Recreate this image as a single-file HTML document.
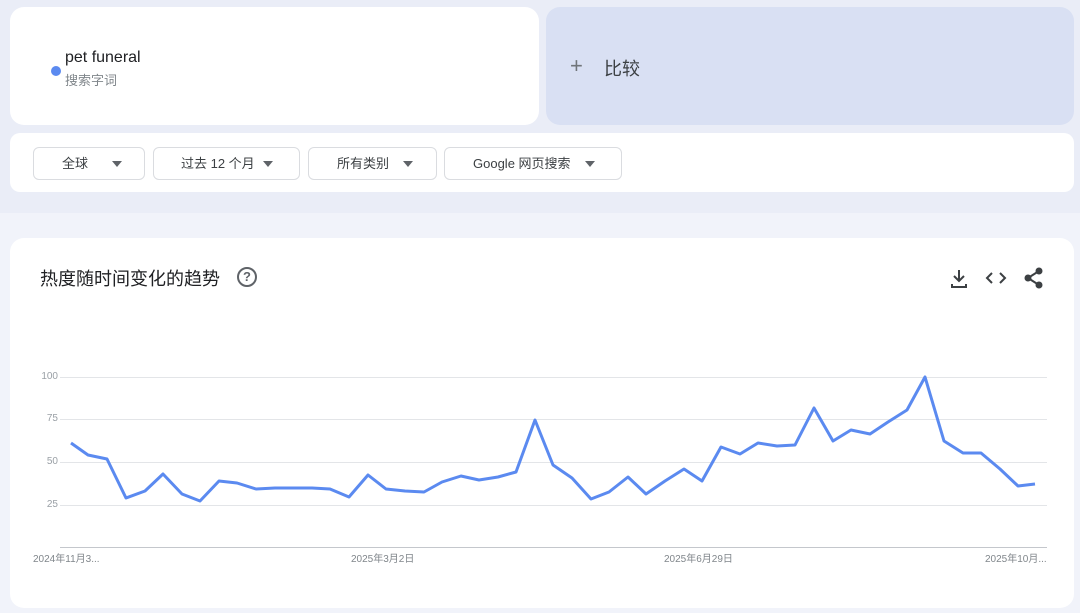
<!DOCTYPE html>
<html><head><meta charset="utf-8"><style>
*{margin:0;padding:0;box-sizing:border-box}
body{width:1080px;height:591px;background:#eaedf7;font-family:"Liberation Sans","Noto Sans CJK SC",sans-serif;position:relative;overflow:hidden}
.card{position:absolute;background:#fff;border-radius:14px}
.btn{position:absolute;top:147px;height:33px;border:1px solid #dadce0;border-radius:6px;font-size:13px;color:#3c4043;line-height:31px;background:#fff}
.btn .t{position:absolute;top:0}
.btn .a{position:absolute;top:13px;width:0;height:0;border-left:5px solid transparent;border-right:5px solid transparent;border-top:6px solid #5f6368}
.yl{position:absolute;left:36px;font-size:10px;color:#9aa0a6;width:22px;text-align:right}
.gl{position:absolute;left:60px;width:987px;height:1px;background:#e3e5e8}
.xl{position:absolute;top:550px;font-size:10px;color:#80868b}
</style></head><body>
<div style="position:absolute;left:0;top:213px;width:1080px;height:400px;background:#f1f3fa"></div>
<div class="card" style="left:10px;top:7px;width:529px;height:118px"></div>
<div style="position:absolute;left:51px;top:66px;width:10px;height:10px;border-radius:50%;background:#5b8af0"></div>
<div style="position:absolute;left:65px;top:49px;font-size:16px;color:#202124">pet funeral</div>
<div style="position:absolute;left:65px;top:70px;font-size:13px;color:#80868b">搜索字词</div>
<div class="card" style="left:546px;top:7px;width:528px;height:118px;background:#d9e0f3"></div>
<div style="position:absolute;left:570px;top:53px;font-size:22px;color:#70757a;font-weight:300">+</div>
<div style="position:absolute;left:604px;top:55px;font-size:18px;color:#3c4043">比较</div>
<div class="card" style="left:10px;top:133px;width:1064px;height:59px;border-radius:10px"></div>
<div class="btn" style="left:33px;width:112px"><span class="t" style="left:28px">全球</span><span class="a" style="left:78px"></span></div>
<div class="btn" style="left:153px;width:147px"><span class="t" style="left:27px">过去 12 个月</span><span class="a" style="left:109px"></span></div>
<div class="btn" style="left:308px;width:129px"><span class="t" style="left:28px">所有类别</span><span class="a" style="left:94px"></span></div>
<div class="btn" style="left:444px;width:178px"><span class="t" style="left:28px">Google 网页搜索</span><span class="a" style="left:140px"></span></div>
<div class="card" style="left:10px;top:238px;width:1064px;height:370px"></div>
<div style="position:absolute;left:40px;top:265px;font-size:18px;color:#202124">热度随时间变化的趋势</div>
<div style="position:absolute;left:237px;top:267px;width:20px;height:20px;border:2px solid #5f6368;border-radius:50%;font-size:13px;font-weight:bold;color:#5f6368;text-align:center;line-height:16px">?</div>
<svg style="position:absolute;left:948px;top:266px" width="100" height="26" viewBox="0 0 100 26" fill="none" stroke="#3c4043" stroke-width="2">
<path d="M11 4v11M6 10l5 5 5-5M4 18v3h14v-3"/>
<path d="M44 7l-5 5 5 5M52 7l5 5-5 5"/>
<circle cx="91" cy="5" r="2.5" fill="#3c4043"/><circle cx="80" cy="12" r="2.5" fill="#3c4043"/><circle cx="91" cy="19" r="2.5" fill="#3c4043"/>
<path d="M80 12l11-7M80 12l11 7"/>
</svg>
<div class="gl" style="top:377px"></div><div class="gl" style="top:419px"></div><div class="gl" style="top:462px"></div><div class="gl" style="top:505px"></div>
<div class="gl" style="top:547px;background:#c4c7cc"></div>
<div class="yl" style="top:371px">100</div><div class="yl" style="top:413px">75</div><div class="yl" style="top:456px">50</div><div class="yl" style="top:499px">25</div>
<div class="xl" style="left:33px">2024年11月3...</div>
<div class="xl" style="left:351px">2025年3月2日</div>
<div class="xl" style="left:664px">2025年6月29日</div>
<div class="xl" style="left:985px">2025年10月...</div>
<svg style="position:absolute;left:0;top:0" width="1080" height="591"><polyline fill="none" stroke="#5b8af0" stroke-width="3" stroke-linejoin="round" points="71,443 88,455 107,459 126,498 145,491 163,474 182,494 200,501 219,481 237,483 256,489 275,488 293,488 312,488 330,489 349,497 368,475 386,489 405,491 424,492 442,482 461,476 479,480 498,477 516,472 535,420 553,465 572,478 591,499 609,492 628,477 646,494 665,481 684,469 702,481 721,447 740,454 758,443 777,446 795,445 814,408 833,441 851,430 870,434 888,422 907,410 925,377 944,441 963,453 981,453 1000,469 1018,486 1035,484"/></svg>
</body></html>
